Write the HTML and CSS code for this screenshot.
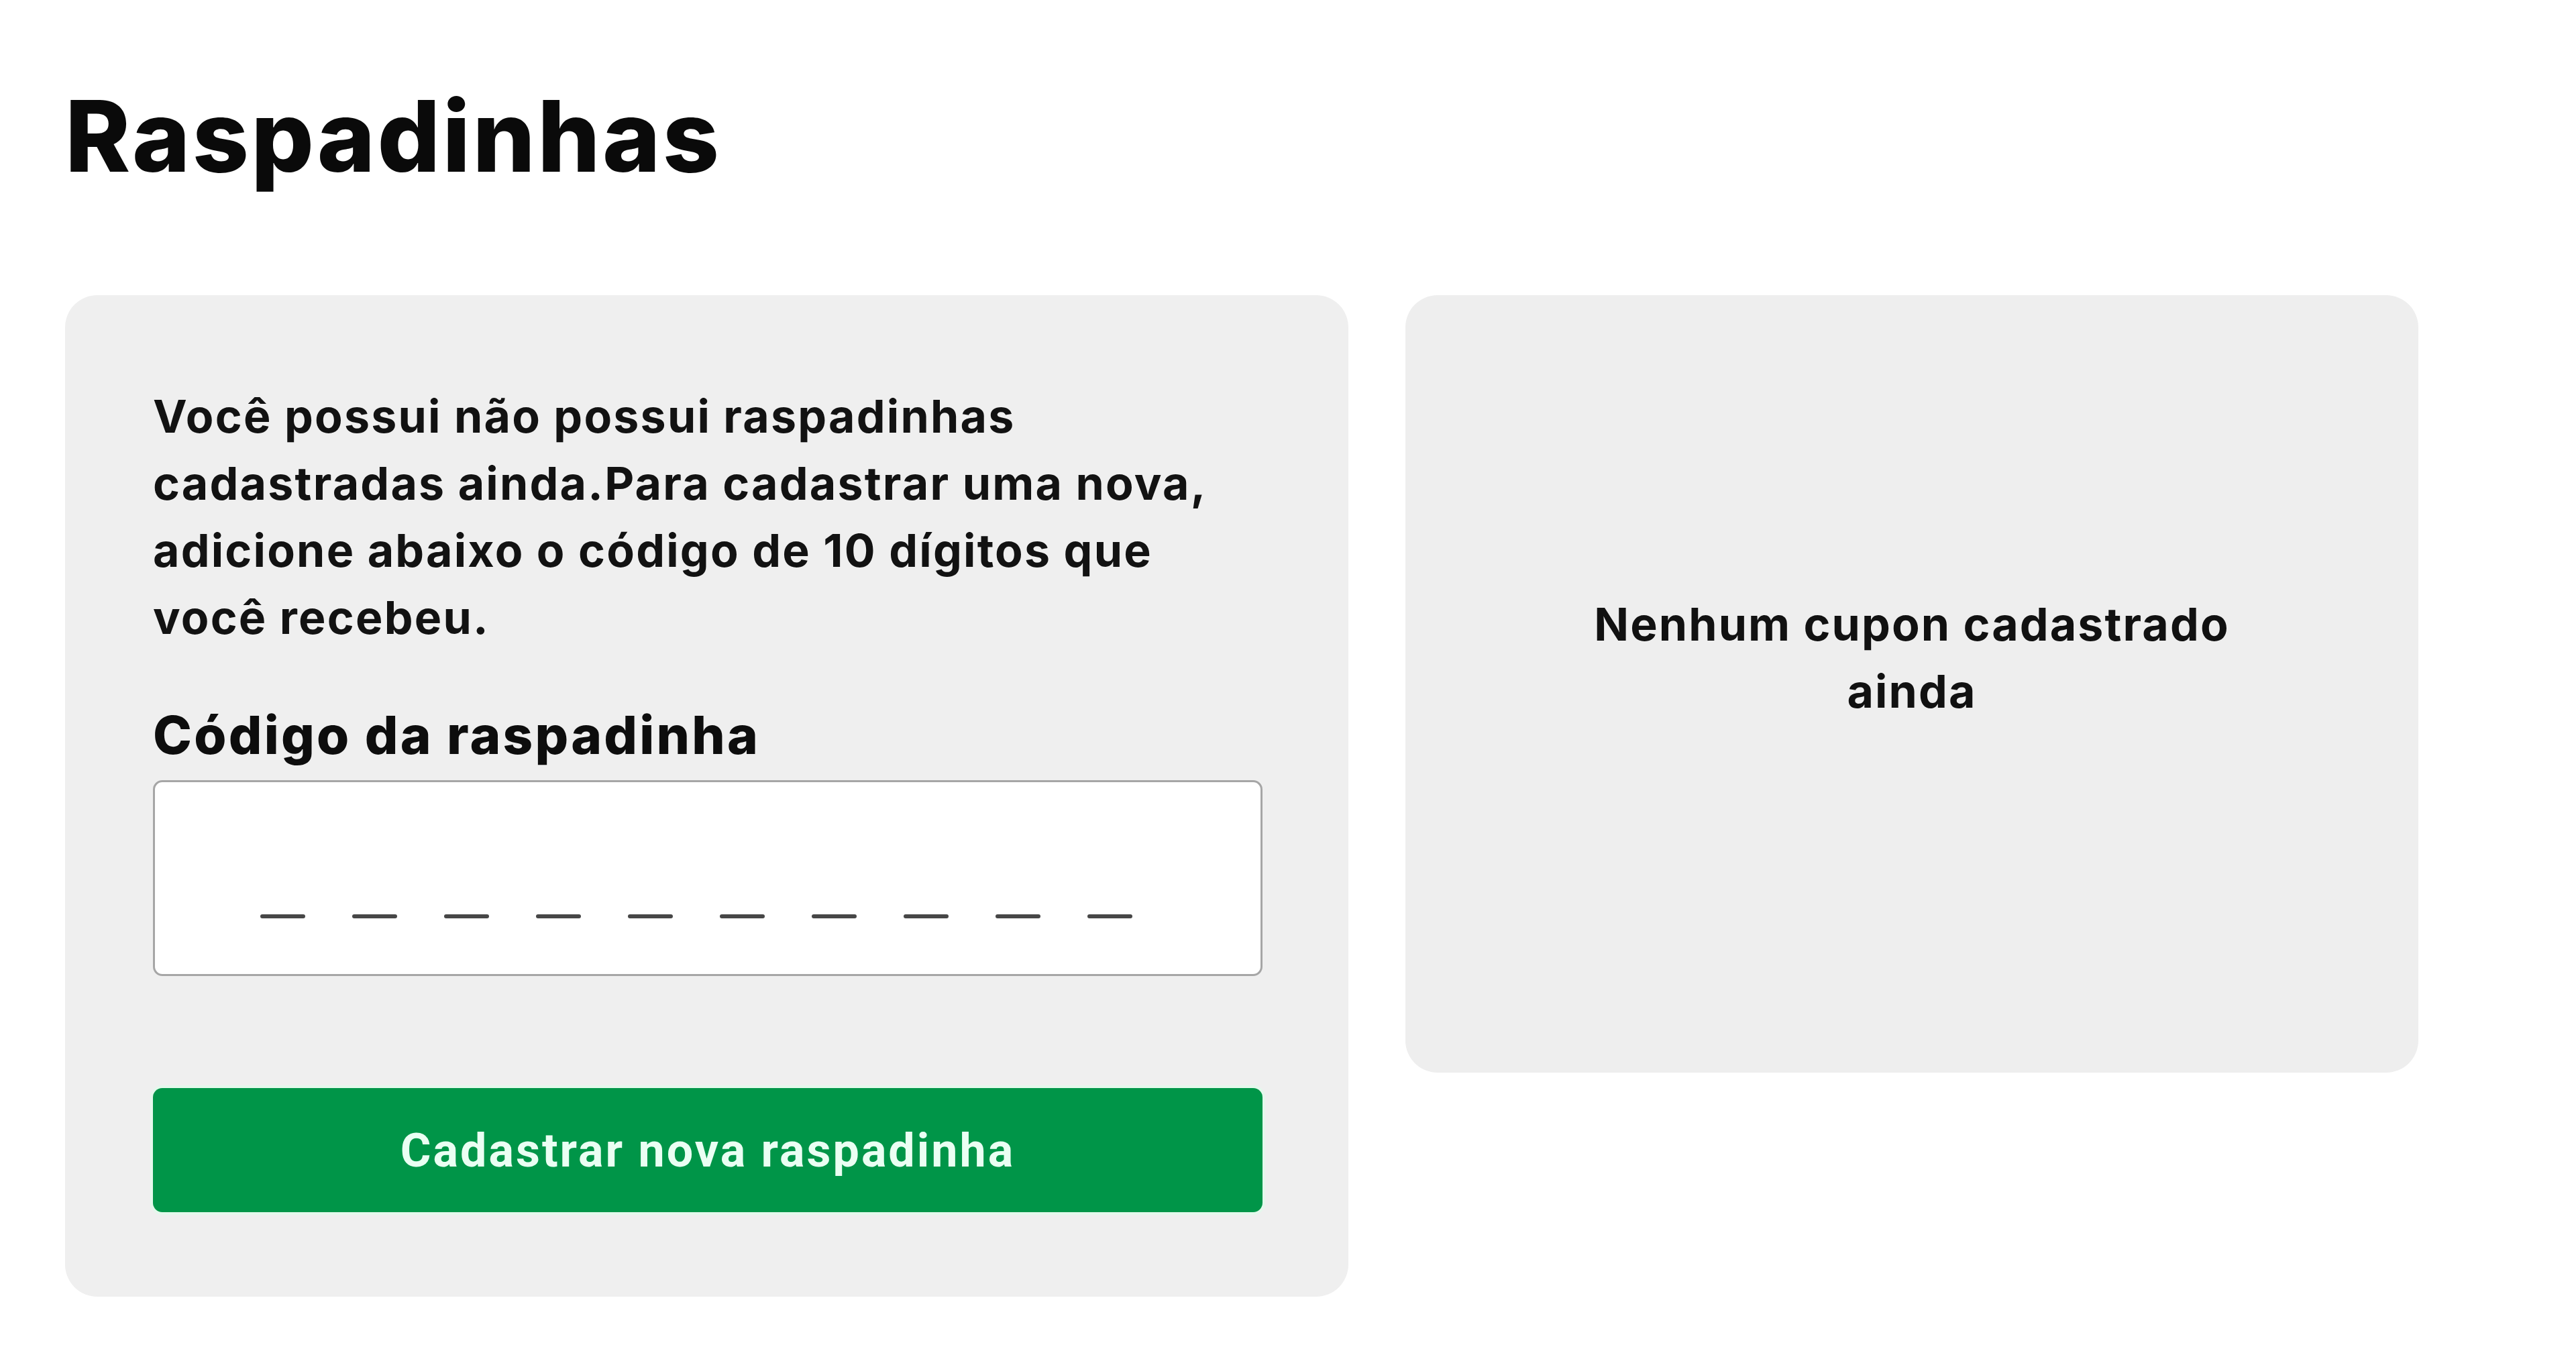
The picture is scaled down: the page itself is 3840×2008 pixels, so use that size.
FILE: index.html
```html
<!DOCTYPE html>
<html lang="pt-BR">
<head>
<meta charset="utf-8">
<title>Raspadinhas</title>
<link rel="stylesheet" href="styles.css">
</head>
<body>
<main class="page">
  <h1 class="title">Raspadinhas</h1>
  <div class="cards">
    <section class="card card-form">
      <p class="intro">Você possui não possui raspadinhas cadastradas ainda.Para cadastrar uma nova, adicione abaixo o código de 10 dígitos que você recebeu.</p>
      <label class="field-label" for="code">Código da raspadinha</label>
      <div class="code-field" id="code">
        <span class="dash"></span><span class="dash"></span><span class="dash"></span><span class="dash"></span><span class="dash"></span><span class="dash"></span><span class="dash"></span><span class="dash"></span><span class="dash"></span><span class="dash"></span>
      </div>
      <button class="btn-primary" type="button">Cadastrar nova raspadinha</button>
    </section>
    <section class="card card-empty">
      <p class="empty-text">Nenhum cupon cadastrado ainda</p>
    </section>
  </div>
</main>
</body>
</html>
```
FILE: styles.css
```css
* { box-sizing: border-box; }
html, body { margin: 0; padding: 0; background: #ffffff; }
body {
  font-family: Inter, "Open Sans", sans-serif;
  color: #111111;
}
.page {
  padding: 115px 97px 0 97px;
}
.title {
  margin: 0 0 149px 0;
  font-size: 147px;
  line-height: 176px;
  font-weight: 800;
  color: #0a0a0a;
  letter-spacing: 3.3px;
}
.cards {
  display: flex;
  align-items: flex-start;
  gap: 85px;
}
.card {
  background: #efefef;
  border-radius: 48px;
}
.card-form {
  width: 1913px;
  padding: 130px 128px 126px 131px;
  display: flex;
  flex-direction: column;
}
.intro {
  margin: 0;
  max-width: 1610px;
  font-size: 68px;
  line-height: 100px;
  font-weight: 700;
  letter-spacing: 2.2px;
  color: #121212;
}
.field-label {
  margin-top: 79px;
  font-size: 78px;
  line-height: 94px;
  font-weight: 800;
  letter-spacing: 3.2px;
  color: #0d0d0d;
}
.code-field {
  margin-top: 20px;
  height: 292px;
  background: #ffffff;
  border: 3px solid #a6a6a6;
  border-radius: 14px;
  display: flex;
  align-items: flex-end;
  gap: 70px;
  padding: 0 0 83px 157px;
}
.dash {
  width: 67px;
  height: 6px;
  border-radius: 3px;
  background: #474747;
}
.btn-primary {
  margin-top: 167px;
  height: 185px;
  width: 100%;
  border: none;
  border-radius: 14px;
  background: #009548;
  box-shadow: 0 0 0 4px #e4f8ec;
  color: #eafff3;
  font-family: Roboto, "Liberation Sans", sans-serif;
  font-weight: 700;
  font-size: 70px;
  letter-spacing: 3px;
  cursor: pointer;
}
.card-empty {
  width: 1510px;
  height: 1159px;
  background: #eeeeee;
  display: flex;
  align-items: center;
  justify-content: center;
  padding-bottom: 80px;
}
.empty-text {
  margin: 0;
  max-width: 1100px;
  text-align: center;
  font-size: 68px;
  line-height: 100px;
  font-weight: 700;
  letter-spacing: 2.1px;
  color: #111111;
}
```
